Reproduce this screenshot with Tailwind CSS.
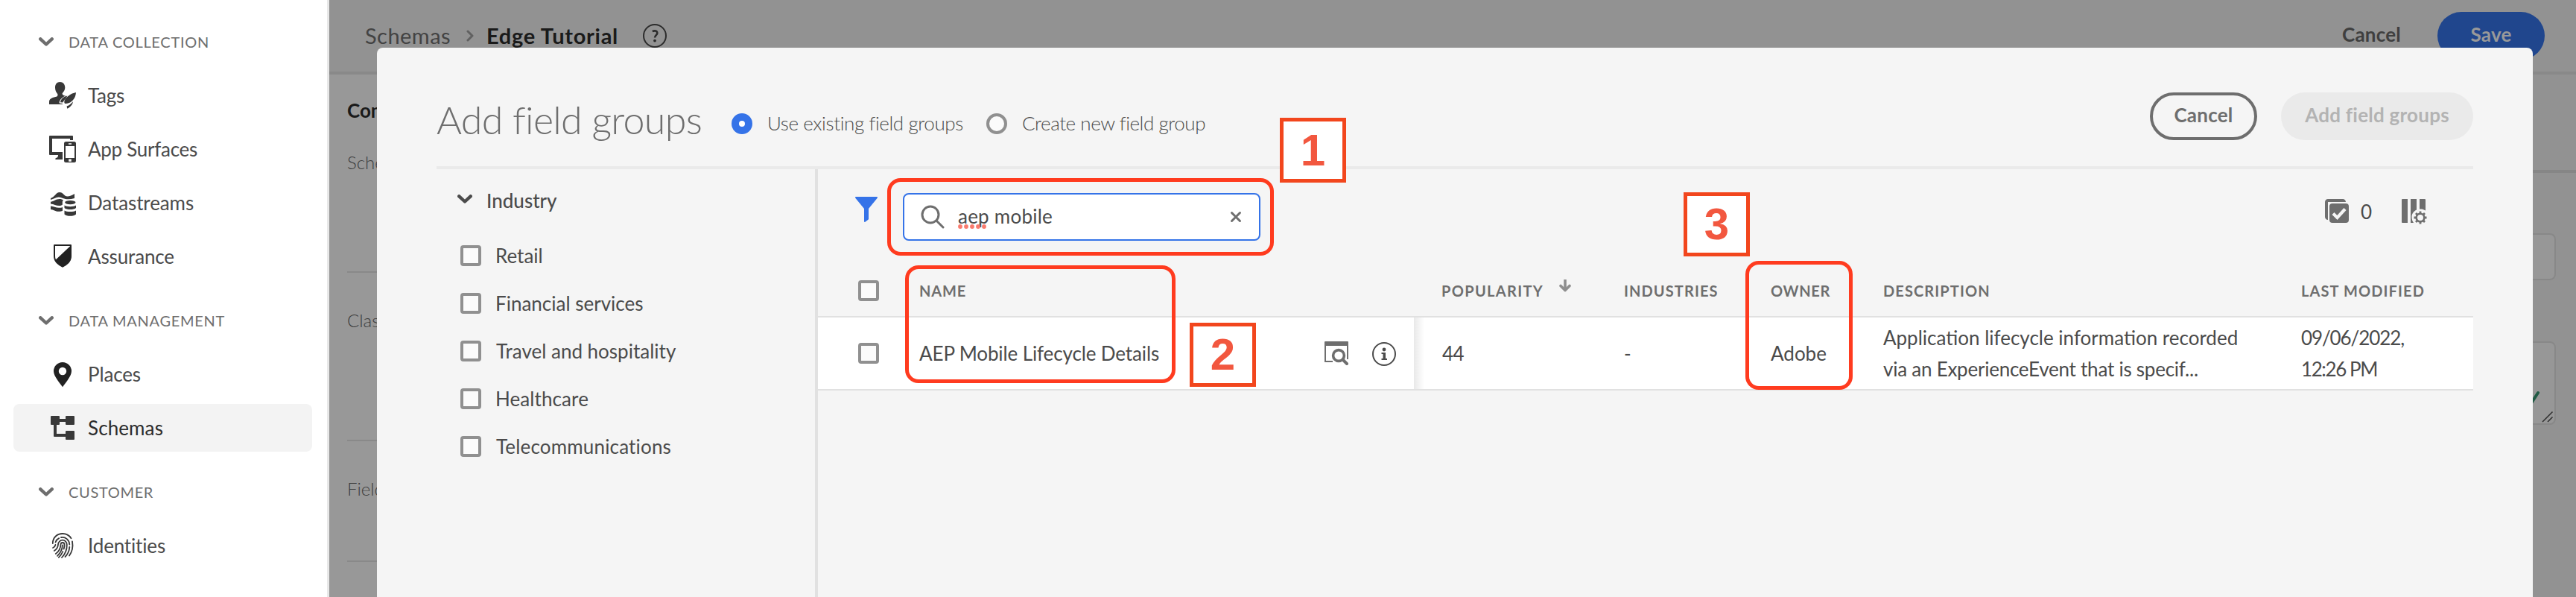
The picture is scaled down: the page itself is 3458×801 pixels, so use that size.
<!DOCTYPE html>
<html lang="en">
<head>
<meta charset="utf-8">
<title>Add field groups</title>
<script src="https://cdn.jsdelivr.net/npm/@tailwindcss/browser@4"></script>
</head>
<body class="relative flex h-[801px] w-[3458px] overflow-hidden bg-white font-['Lato',sans-serif] text-[26px] leading-[32px] text-[#4b4b4b] whitespace-nowrap">

<!-- Navigation -->
<nav class="flex h-full w-[442px] shrink-0 flex-col gap-[22px] border-r-[3px] border-[#e8e8e8] bg-white pr-5 pl-[18px] pt-6">
  <section class="flex flex-col gap-2">
    <h2 class="flex h-16 items-center gap-5 pl-[34px] text-xl tracking-[0.71px] text-[#6e6e6e]">
      <svg class="h-3 w-5 shrink-0" viewBox="0 0 20 12" fill="none" stroke="#6e6e6e" stroke-width="4.4" stroke-linecap="round" stroke-linejoin="round"><path d="M2.3 2.3 10 9.5l7.700-7.200"/></svg>
      <span>DATA COLLECTION</span>
    </h2>
    <a class="flex h-16 items-center gap-4 pl-12">
      <svg class="size-9 shrink-0" viewBox="0 0 36 36" fill="#383838"><path d="M14.500 0C10.300 0 8 3 8 7.500c0 3.600 1.300 6.300 3 8.200.5.600.6 1.700.3 2.600-.4 1-1.300 1.400-2.800 1.800C3 21.300 0 23 0 27v3h18.600l-1.200-1-3.700-.6c-.6-3 3.600-8.500 8.600-9.800-3.300-.5-4.700-1.200-4.700-3.400 2-2 3.700-4.600 3.700-7.700C21.300 3 18.700 0 14.500 0z"/><path d="M36 14c-.4 7-4.500 12.500-9.800 14.300-1.700.6-3.600 1-4.700.6-1.300-.5-1.500-2.300-.9-4C22.500 20 29 15.400 36 14zM24.500 18.500l-6.300 8.900-3.200-.2c.4-4 4.800-8 9.500-8.700zM31.800 26.200c.2 3.500-3.300 7.600-7.600 9.500l-.6-3.300c3.600-1 6-3.200 8.200-6.200z"/></svg>
      <span class="tracking-[-0.27px]">Tags</span>
    </a>
    <a class="flex h-16 items-center gap-4 pl-12">
      <svg class="size-9 shrink-0" viewBox="0 0 36 36" fill="#383838"><path d="M1 0h30a1 1 0 0 1 1 1v5h-4V4H4v18h14v10H8.400v-1.400c0-.5 2.600-.6 3.300-2.600.3-1 .3-1.500.3-2H1a1 1 0 0 1-1-1V1a1 1 0 0 1 1-1z"/><path fill-rule="evenodd" d="M22.500 8h11A2.500 2.500 0 0 1 36 10.500v23a2.500 2.500 0 0 1-2.500 2.500h-11a2.500 2.500 0 0 1-2.500-2.500v-23A2.500 2.500 0 0 1 22.500 8zM22 14v16h12V14zm4-3.800v1.600h4v-1.600zm.2 21.300v3.300h3.600v-3.300z"/></svg>
      <span class="tracking-[-0.27px]">App Surfaces</span>
    </a>
    <a class="flex h-16 items-center gap-4 pl-12">
      <svg class="size-9 shrink-0" viewBox="0 0 36 36" fill="#383838"><path d="M2 12c5-1 7-8 12-8s6 5.500 10.500 5.500c3 0 6-1.500 9.500-3.500v6c-4 1-8 1.600-12 1C18 12 16 10.500 12.500 10.500S6 13 2 14zM2 16.800c4-.3 7-3.800 12-3.800 2 0 4 .6 5 1.600-1 1-1.200 1.900-1.200 3v3.200c-1.200.9-2.500 1.200-4.300 1.200C9 22 6.500 20 2 19.500zM2 22.500c4 .5 7 2.300 11 2.300 2 0 3.500-.3 5-.9v4.800c-1.500.7-3 1.100-5 1.100-5 0-7-2.600-11-2.800z"/><ellipse cx="28.300" cy="17.600" rx="7.200" ry="2.700"/><path d="M20.500 21.500c3 2.300 12.500 2.300 15.500 0v3.400c-3 2.700-12.500 2.700-15.500 0zM20.500 28.400c3 2.300 12.500 2.300 15.500 0v5c-3 3.200-12.500 3.200-15.500 0z"/></svg>
      <span class="tracking-[-0.11px]">Datastreams</span>
    </a>
    <a class="flex h-16 items-center gap-4 pl-12">
      <svg class="size-9 shrink-0" viewBox="0 0 36 36"><path d="M7 3h22v14.500c0 7.500-5.500 11-11 14.200C12.500 28.500 7 25 7 17.500z" fill="#fff" stroke="#222" stroke-width="2" stroke-linejoin="round"/><path d="M29.500 3v14.500c0 8-6 11.500-11.500 14.700-4-2.300-8-4.700-10-9z" fill="#222"/></svg>
      <span class="tracking-[-0.14px]">Assurance</span>
    </a>
  </section>
  <section class="flex flex-col gap-2">
    <h2 class="flex h-16 items-center gap-5 pl-[34px] text-xl tracking-[0.72px] text-[#6e6e6e]">
      <svg class="h-3 w-5 shrink-0" viewBox="0 0 20 12" fill="none" stroke="#6e6e6e" stroke-width="4.4" stroke-linecap="round" stroke-linejoin="round"><path d="M2.3 2.3 10 9.500l7.700-7.200"/></svg>
      <span>DATA MANAGEMENT</span>
    </h2>
    <a class="flex h-16 items-center gap-4 pl-12">
      <svg class="size-9 shrink-0" viewBox="0 0 36 36" fill="#222"><path fill-rule="evenodd" d="M18 2A12 12 0 0 0 6 14c0 6 6 13 12 21.200C24 27 30 20 30 14A12 12 0 0 0 18 2zm0 6.800a5.200 5.200 0 1 1 0 10.400 5.200 5.200 0 0 1 0-10.400z"/></svg>
      <span class="tracking-[-0.13px]">Places</span>
    </a>
    <a class="flex h-16 items-center gap-4 rounded-lg bg-[#f3f3f3] pl-12 text-[#2c2c2c]">
      <svg class="size-9 shrink-0" viewBox="0 0 36 36" fill="#383838"><rect x="2" y="2" width="12" height="12" rx="1"/><rect x="22" y="2" width="12" height="12" rx="1"/><rect x="22" y="22" width="12" height="12" rx="1"/><path d="M14 6h8v4h-8zM6 14h4v12h12v4H7a1 1 0 0 1-1-1z"/></svg>
      <span class="tracking-[0.11px]">Schemas</span>
    </a>
  </section>
  <section class="flex flex-col gap-2">
    <h2 class="flex h-16 items-center gap-5 pl-[34px] text-xl tracking-[0.66px] text-[#6e6e6e]">
      <svg class="h-3 w-5 shrink-0" viewBox="0 0 20 12" fill="none" stroke="#6e6e6e" stroke-width="4.400" stroke-linecap="round" stroke-linejoin="round"><path d="M2.300 2.300 10 9.500l7.700-7.200"/></svg>
      <span>CUSTOMER</span>
    </h2>
    <a class="flex h-16 items-center gap-4 pl-12">
      <svg class="size-9 shrink-0" viewBox="0 0 36 36" fill="none" stroke="#383838" stroke-width="1.800" stroke-linecap="round"><path d="M4.800 15C4.800 7 11 2 18 2c5 0 9 2.300 11.500 6.200M31 12.500c1.200 6.500 0 13.500-4 19M8.500 13.500c.8-2.500 2.400-4.300 4.700-5.400M16 7c6-1 11 3.500 11.300 9.500M27.300 20c-.3 5-2.300 9.500-5.800 13M5 21c2-.8 3-2 3.400-4M6.800 25c3.200-2 5-4.500 5.200-8.500.2-3.500 3-5.800 6-5.800s5.700 2.500 5.800 6c.2 6.300-2.300 12.500-6.800 17.300M8.800 29c4-2.800 6.500-7 6.700-12.500.1-1.500 1.200-2.500 2.500-2.500s2.400 1 2.500 2.600c.2 2-.2 4-.8 6M18.300 26c-1.300 3-3.200 5.700-5.500 7.800M17.800 17.500c0 5.500-2.800 10.500-6.800 14.300"/></svg>
      <span class="tracking-[-0.16px]">Identities</span>
    </a>
  </section>
</nav>

<!-- Schema editor, dimmed behind the dialog -->
<main class="flex h-full flex-1 flex-col bg-[#929292]">
  <header class="flex h-[100px] items-start border-b-4 border-[#898989] pr-[42px] pl-12">
    <div class="flex h-24 flex-1 items-center pb-px text-[29px]">
      <span class="w-[115px] tracking-[0.46px] text-[#434343]">Schemas</span>
      <svg class="ml-[21px] h-4 w-2.5" viewBox="0 0 10 16" fill="none" stroke="#616161" stroke-width="3" stroke-linecap="round" stroke-linejoin="round"><path d="m2 2 6 6-6 6"/></svg>
      <b class="ml-[17px] w-[176px] tracking-[0.71px] text-[#1a1a1a]">Edge Tutorial</b>
      <svg class="ml-[34px] size-8" viewBox="0 0 32 32"><circle cx="16" cy="16" r="15" fill="none" stroke="#2c2c2c" stroke-width="2"/><path d="M12.800 10.200c3-1.700 6.500-.8 6.500 2.200 0 2.600-3.200 3-3.200 6" fill="none" stroke="#2c2c2c" stroke-width="2.600"/><circle cx="16" cy="22.600" r="1.900" fill="#2c2c2c"/></svg>
    </div>
    <div class="flex h-24 items-center gap-[49px] font-bold tracking-[0.22px]">
      <span class="pb-1 text-[#3f3f3f]">Cancel</span>
      <button class="h-16 w-36 rounded-full bg-[#20468d] pb-1 text-[#999]">Save</button>
    </div>
  </header>
  <div class="flex flex-1 justify-between">
    <aside class="flex w-16 flex-col overflow-hidden bg-[#989898] pl-6 text-2xl font-light text-[#3c3c3c]">
      <h3 class="pt-8 text-[26px] leading-[32px] font-bold text-[#1a1a1a]">Composition</h3>
      <div class="mt-[38px] h-[164px] border-b-2 border-[#898989]">Schema properties</div>
      <div class="h-[226px] border-b-2 border-[#898989] pt-12">Class</div>
      <div class="h-[162px] border-b-2 border-[#898989] pt-12">Field groups</div>
    </aside>
    <aside class="w-[358px] pt-32">
      <div class="flex h-full flex-col border-t-4 border-[#868686] pt-[81px] pr-[27px]">
        <div class="h-[63px] shrink-0 rounded-lg border-2 border-[#888] bg-[#979797]"></div>
        <div class="mt-[82px] flex h-[112px] shrink-0 items-end justify-end rounded-lg border-2 border-[#888] bg-[#979797]">
          <svg class="h-[50px] w-10" viewBox="0 0 40 50" fill="none"><path d="m1 20 6 6 11-17" stroke="#215b45" stroke-width="4" stroke-linecap="round" stroke-linejoin="round"/><path d="m24 48 13.500-13.500M31 48l6.500-6.500" stroke="#333" stroke-width="1.600"/></svg>
        </div>
      </div>
    </aside>
  </div>
</main>

<!-- Dialog -->
<div role="dialog" class="absolute top-16 left-[506px] flex h-[737px] w-[2894px] flex-col rounded-t-lg bg-[#f5f5f5] px-20">
  <header class="flex h-[163px] shrink-0 items-center border-b-4 border-[#eaeaea] pt-[35px]">
    <h1 class="w-[396px] pb-0.5 text-[52px] font-light tracking-[-0.71px] text-[#6e6e6e]">Add field groups</h1>
    <label class="mt-[10px] flex w-[342px] items-center font-light tracking-[-0.4px]"><i class="mr-5 size-7 rounded-full border-[10px] border-[#3573e8] bg-white"></i><span class="pb-0.5">Use existing field groups</span></label>
    <label class="mt-[10px] flex items-center font-light tracking-[-0.44px]"><i class="mr-5 size-7 rounded-full border-4 border-[#909090] bg-[#fbfbfb]"></i><span class="pb-0.5">Create new field group</span></label>
    <div class="mb-[10px] ml-auto flex gap-8 font-bold tracking-[0.24px]">
      <button class="h-16 w-36 rounded-full border-4 border-[#6e6e6e] pb-1 text-[#6e6e6e]">Cancel</button>
      <button class="h-16 w-[258px] rounded-full bg-[#eaeaea] pb-1 text-[#b3b3b3]">Add field groups</button>
    </div>
  </header>

  <div class="flex flex-1">
    <!-- Filters -->
    <aside class="w-[512px] border-r-4 border-[#e1e1e1] pt-[26px] pl-7">
      <h2 class="flex items-center gap-[19px] font-medium">
        <svg class="mb-1 h-3 w-5" viewBox="0 0 20 12" fill="none" stroke="#4b4b4b" stroke-width="4.400" stroke-linecap="round" stroke-linejoin="round"><path d="M2.300 2.300 10 9.500l7.700-7.200"/></svg>
        <span>Industry</span>
      </h2>
      <ul class="mt-[26px] flex flex-col pl-1">
        <li class="flex h-16 items-center gap-[19px]"><i class="size-7 rounded border-4 border-[#909090] bg-[#fbfbfb]"></i><span>Retail</span></li>
        <li class="flex h-16 items-center gap-[19px]"><i class="size-7 rounded border-4 border-[#909090] bg-[#fbfbfb]"></i><span>Financial services</span></li>
        <li class="flex h-16 items-center gap-5"><i class="size-7 rounded border-4 border-[#909090] bg-[#fbfbfb]"></i><span>Travel and hospitality</span></li>
        <li class="flex h-16 items-center gap-[19px]"><i class="size-7 rounded border-4 border-[#909090] bg-[#fbfbfb]"></i><span class="tracking-[0.09px]">Healthcare</span></li>
        <li class="flex h-16 items-center gap-5"><i class="size-7 rounded border-4 border-[#909090] bg-[#fbfbfb]"></i><span class="tracking-[0.17px]">Telecommunications</span></li>
      </ul>
    </aside>

    <!-- Results -->
    <section class="w-[2222px]">
      <div class="flex h-32 items-center pl-[50px]">
        <svg class="mb-5 h-[34px] w-[30px]" viewBox="0 0 30 34" fill="#3573e8"><path d="M1 0h28c1 0 1.400 1 .7 1.800L18 16v13.500c0 .5-.2.900-.6 1.200l-4 3c-.6.500-1.400.1-1.400-.7V16L.3 1.800C-.4 1 0 0 1 0z"/></svg>
        <div class="ml-[34px] flex h-16 w-[480px] items-center rounded-lg border-2 border-[#3573e8] bg-white pr-[23px] pl-[22px]">
          <svg class="size-8" viewBox="0 0 32 32" fill="none" stroke="#6e6e6e" stroke-width="3" stroke-linecap="round"><circle cx="13" cy="13" r="11"/><path d="m21 21 9 9"/></svg>
          <span class="relative ml-[18px] flex-1 pb-0.5 tracking-[0.23px]">aep mobile
            <svg class="absolute top-[27px] left-0 h-1.5 w-[38px]" viewBox="0 0 38 6" fill="#f97b6e"><circle cx="3" cy="3" r="2.900"/><circle cx="11" cy="3" r="2.900"/><circle cx="19" cy="3" r="2.900"/><circle cx="27" cy="3" r="2.900"/><circle cx="35" cy="3" r="2.900"/></svg>
          </span>
          <svg class="size-4" viewBox="0 0 16 16" stroke="#6e6e6e" stroke-width="3" stroke-linecap="round"><path d="m2.500 2.500 11 11m0-11-11 11"/></svg>
        </div>
        <svg class="mb-4 ml-auto size-8" viewBox="0 0 32 32" fill="#6e6e6e"><path d="M4 0h20c2.200 0 4 1.800 4 4H4v24c-2.200 0-4-1.800-4-4V4c0-2.200 1.800-4 4-4z"/><rect x="6" y="6" width="26" height="26" rx="4"/><path d="m11 19.500 5.500 5.500L27 13.500" fill="none" stroke="#f5f5f5" stroke-width="4.200"/></svg>
        <span class="mb-4 ml-4 w-[55px] pt-px">0</span>
        <svg class="mr-[62px] mb-3.5 h-[34px] w-[34px]" viewBox="0 0 34 34" fill="#6e6e6e"><path d="M1 0h7v32H1a1 1 0 0 1-1-1V1a1 1 0 0 1 1-1zM12 0h8v14.500c-4 1.700-6.500 5.500-6.500 9.500 0 3 .7 5.500 2.500 8h-4zM24 0h7a1 1 0 0 1 1 1v14.500c-2.500-1.700-5-2.300-8-2z"/><circle cx="25" cy="25" r="5.300" fill="none" stroke="#6e6e6e" stroke-width="2.600"/><path d="M25 16.500v4M25 29.500v4M16.500 25h4M29.500 25h4M19 19l2.700 2.700M28.300 28.300 31 31M31 19l-2.700 2.700M21.700 28.300 19 31" stroke="#6e6e6e" stroke-width="2.800"/></svg>
      </div>

      <div class="grid h-[69px] grid-cols-[136px_664px_282px_197px_151px_561px_231px] items-center text-xl font-bold tracking-[1.1px] text-[#6e6e6e]">
        <i class="ml-[54px] size-7 rounded border-4 border-[#909090] bg-[#fbfbfb]"></i>
        <span class="tracking-[0.82px]">NAME</span>
        <span class="flex items-center pl-[37px]"><span class="w-[158px] tracking-[1.32px]">POPULARITY</span>
          <svg class="mb-3 h-[17px] w-4" viewBox="0 0 16 17" fill="none" stroke="#8e8e8e" stroke-width="3.600" stroke-linejoin="round" stroke-linecap="round"><path d="M8 0v13" stroke-linecap="butt"/><path d="m2 8.500 6 6 6-6"/></svg></span>
        <span>INDUSTRIES</span>
        <span class="tracking-[0.67px]">OWNER</span>
        <span>DESCRIPTION</span>
        <span>LAST MODIFIED</span>
      </div>
      <div class="grid h-[100px] grid-cols-[136px_664px_282px_197px_151px_561px_231px] items-center border-y-2 border-[#e1e1e1] bg-white">
        <i class="ml-[54px] size-7 rounded border-4 border-[#909090] bg-[#fbfbfb]"></i>
        <span class="flex items-center"><span class="flex-1 tracking-[-0.12px]">AEP Mobile Lifecycle Details</span>
          <svg class="mr-8 size-8" viewBox="0 0 32 32" fill="none" stroke="#6e6e6e"><path d="M0 1a1 1 0 0 1 1-1h30a1 1 0 0 1 1 1v5H0z" fill="#6e6e6e" stroke="none"/><path d="M1 5v22h10M31 5v19" stroke-width="2"/><circle cx="19" cy="19" r="7.400" stroke-width="3.600"/><path d="m25 25 5 5" stroke-width="4" stroke-linecap="round"/></svg>
          <svg class="mt-0.5 mr-6 size-8" viewBox="0 0 32 32"><circle cx="16" cy="16" r="15" fill="none" stroke="#4b4b4b" stroke-width="2"/><circle cx="16" cy="10" r="2.400" fill="#4b4b4b"/><path d="M12.500 14h5.500v8h2v2h-7.500v-2h2v-6h-2z" fill="#4b4b4b"/></svg>
        </span>
        <span class="flex h-full items-center bg-linear-to-r from-[#e9e9e9] to-white to-[14px] pl-[38px] tracking-[-0.59px]">44</span>
        <span>-</span>
        <span>Adobe</span>
        <span class="leading-[42px]">Application lifecycle information recorded<br><span class="tracking-[-0.24px]">via an ExperienceEvent that is specif...</span></span>
        <span class="leading-[42px]"><span class="tracking-[-1.1px]">09/06/2022,</span><br><span class="tracking-[-1.4px]">12:26 PM</span></span>
      </div>
    </section>
  </div>
</div>

<!-- Annotations -->
<div class="absolute top-[239px] left-[1191px] h-[104px] w-[519px] rounded-[18px] border-5 border-[#ff3b1f]"></div>
<div class="absolute top-[356px] left-[1215px] h-[158px] w-[363px] rounded-[18px] border-5 border-[#ff3b1f]"></div>
<div class="absolute top-[350px] left-[2343px] h-[173px] w-[144px] rounded-[18px] border-5 border-[#ff3b1f]"></div>
<div class="absolute top-[158px] left-[1718px] flex h-[87px] w-[89px] items-center justify-center border-5 border-[#f2461d] bg-white font-['Liberation_Sans',sans-serif] text-[60px] font-bold text-[#f2573f]">1</div>
<div class="absolute top-[433px] left-[1597px] flex h-[86px] w-[89px] items-center justify-center border-5 border-[#f2461d] bg-white font-['Liberation_Sans',sans-serif] text-[60px] font-bold text-[#f2573f]">2</div>
<div class="absolute top-[258px] left-[2260px] flex h-[86px] w-[89px] items-center justify-center border-5 border-[#f2461d] bg-white font-['Liberation_Sans',sans-serif] text-[60px] font-bold text-[#f2573f]">3</div>
</body>
</html>
